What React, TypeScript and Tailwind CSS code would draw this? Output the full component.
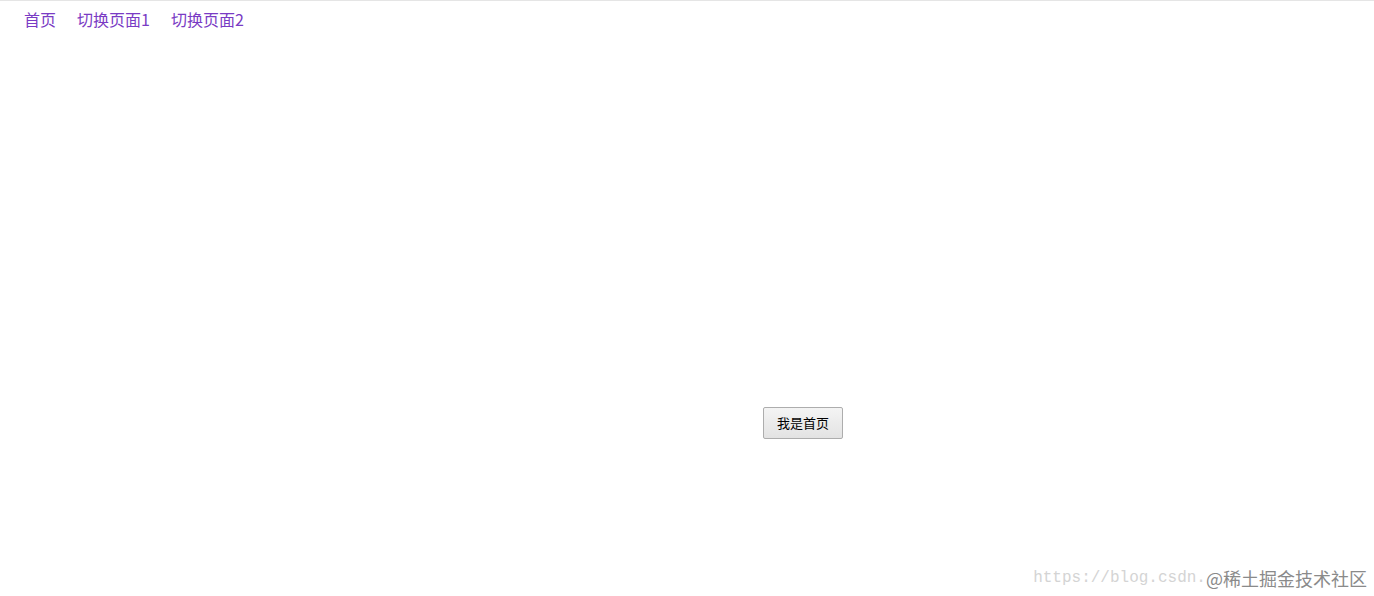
export default function App() {
  return (
    <div className="relative h-[596px] w-full overflow-hidden bg-white border-t border-[#e5e5e5] font-['Microsoft_YaHei','Noto_Sans_CJK_SC',sans-serif]">
      {/* Nav */}
      <nav className="flex gap-[21px] pl-6 pt-[7px] text-[16px] leading-[22px] text-[#7a3bc4]">
        <a className="cursor-pointer">首页</a>
        <a className="cursor-pointer">切换页面1</a>
        <a className="cursor-pointer">切换页面2</a>
      </nav>

      {/* Content */}
      <div className="flex justify-center pt-[377px] pl-[232px]">
        <button className="h-[32px] w-[80px] rounded-[2px] border border-[#adadad] bg-gradient-to-b from-[#f4f4f4] to-[#e3e3e3] text-[13px] font-normal text-black">
          我是首页
        </button>
      </div>

      {/* Watermark */}
      <div className="absolute bottom-[6px] right-[7px] flex items-end">
        <span className="font-['Liberation_Mono',monospace] text-[16px] text-[#d4d4d4]">https://blog.csdn.</span>
        <span className="text-[18px] text-[#8a8a8a] leading-[24px] font-['Noto_Sans_CJK_SC',sans-serif]">@稀土掘金技术社区</span>
      </div>
    </div>
  );
}
